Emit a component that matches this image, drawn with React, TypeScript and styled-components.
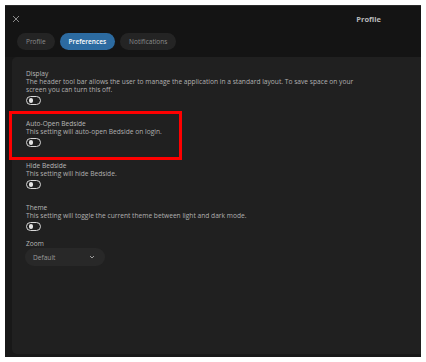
import styled, { createGlobalStyle } from 'styled-components';

const GlobalStyle = createGlobalStyle`
  html, body {
    margin: 0;
    padding: 0;
    background: #ffffff;
  }
  body {
    font-family: "Open Sans", "Noto Sans", sans-serif;
  }
`;

const Frame = styled.div`
  margin: 5px 5px 0 5px;
  width: 416px;
  height: 352px;
  background: #181818;
  display: flex;
  flex-direction: column;
`;

const Header = styled.header`
  height: 51px;
  background: #141414;
  border-top: 1px solid #2a2a2a;
  display: flex;
  flex-direction: column;
  padding: 0 0 0 7px;
`;

const TopRow = styled.div`
  height: 24px;
  display: flex;
  align-items: center;
  justify-content: space-between;
  padding-right: 40px;
`;

const CloseButton = styled.button`
  background: none;
  border: none;
  padding: 0;
  width: 8px;
  height: 8px;
  display: flex;
  color: #8a8a8a;
  margin-top: 2px;
`;

const Title = styled.h1`
  margin: 0;
  font-size: 7.5px;
  font-weight: 700;
  color: #b9b9b9;
  margin-top: 2px;
`;

const Tabs = styled.nav`
  display: flex;
  gap: 5px;
  padding-left: 5px;
  margin-top: 3px;
`;

const Tab = styled.button<{ $active?: boolean }>`
  height: 17px;
  padding: 0 9px;
  border: none;
  border-radius: 9px;
  font-family: inherit;
  font-size: 6.5px;
  font-weight: ${p => (p.$active ? 600 : 400)};
  background: ${p => (p.$active ? '#2c6ba1' : '#242424')};
  color: ${p => (p.$active ? '#ffffff' : '#8c8c8c')};
`;

const Body = styled.div`
  flex: 1;
  display: flex;
  padding: 0 0 3px 7px;
`;

const Panel = styled.main`
  flex: 1;
  background: #202020;
  border-radius: 5px 0 0 5px;
  padding: 13px 14px;
  display: flex;
  flex-direction: column;
  gap: 15px;
`;

const Setting = styled.section<{ $highlight?: boolean }>`
  position: relative;
  display: flex;
  flex-direction: column;
  width: 148px;
  ${p =>
    p.$highlight &&
    `
    &::after {
      content: '';
      position: absolute;
      left: -17px;
      right: -8px;
      top: -9px;
      bottom: -13px;
      border: 3px solid #ff0000;
      pointer-events: none;
    }
  `}
`;

const ZoomSetting = styled(Setting)`
  margin-top: -6px;
`;

const Label = styled.div`
  font-size: 6.6px;
  line-height: 8px;
  color: #b8b8b8;
  white-space: nowrap;
`;

const Description = styled.div`
  font-size: 6.65px;
  line-height: 8px;
  color: #b0b0b0;
  width: 345px;
`;

const Switch = styled.span`
  margin-top: 2px;
  width: 15px;
  height: 9px;
  box-sizing: border-box;
  border: 1.3px solid #d8d8d8;
  border-radius: 5px;
  display: flex;
  align-items: center;
  padding: 0 1.5px;
  &::before {
    content: '';
    width: 4.5px;
    height: 4.5px;
    border-radius: 50%;
    background: #e4e4e4;
  }
`;

const SelectBox = styled.div`
  width: 80px;
  height: 18px;
  margin-left: -1px;
  border-radius: 9px;
  background: #282828;
  display: flex;
  align-items: center;
  justify-content: space-between;
  box-sizing: border-box;
  padding: 0 10px 0 8px;
  font-size: 6.6px;
  color: #9c9c9c;
`;

const settings = [
  {
    label: 'Display',
    text: 'The header tool bar allows the user to manage the application in a standard layout. To save space on your screen you can turn this off.',
  },
  { label: 'Auto-Open Bedside', text: 'This setting will auto-open Bedside on login.', highlight: true },
  { label: 'Hide Bedside', text: 'This setting will hide Bedside.' },
  { label: 'Theme', text: 'This setting will toggle the current theme between light and dark mode.' },
];

export default function App() {
  return (
    <>
      <GlobalStyle />
      <Frame>
        <Header>
          <TopRow>
            <CloseButton aria-label="Close">
              <svg width="8" height="8" viewBox="0 0 8 8">
                <path d="M1 1 L7 7 M7 1 L1 7" stroke="currentColor" strokeWidth="1" />
              </svg>
            </CloseButton>
            <Title>Profile</Title>
          </TopRow>
          <Tabs>
            <Tab>Profile</Tab>
            <Tab $active>Preferences</Tab>
            <Tab>Notifications</Tab>
          </Tabs>
        </Header>
        <Body>
          <Panel>
            {settings.map(s => (
              <Setting key={s.label} $highlight={s.highlight}>
                <Label>{s.label}</Label>
                <Description>{s.text}</Description>
                <Switch />
              </Setting>
            ))}
            <ZoomSetting>
              <Label>Zoom</Label>
              <SelectBox>
                Default
                <svg width="6" height="4" viewBox="0 0 6 4">
                  <path d="M1 1 L3 3 L5 1" stroke="#9c9c9c" strokeWidth="1" fill="none" />
                </svg>
              </SelectBox>
            </ZoomSetting>
          </Panel>
        </Body>
      </Frame>
    </>
  );
}
